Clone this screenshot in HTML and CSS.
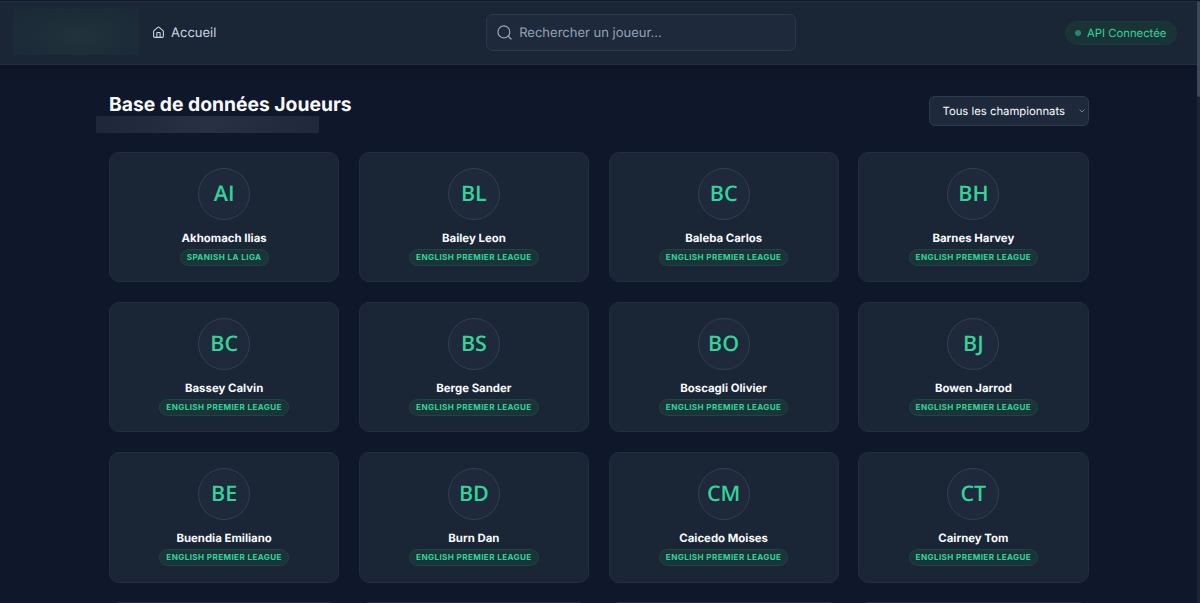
FILE: index.html
```html
<!DOCTYPE html>
<html lang="fr">
<head>
  <meta charset="UTF-8" />
  <meta name="viewport" content="width=device-width, initial-scale=1.0"/>
  <title>Base de données Joueurs</title>
  <link rel="stylesheet" href="styles.css">
</head>
<body>
  <header class="navbar">
    <div class="nav-left">
      <div class="logo"></div>
      <a class="nav-link" href="#">
        <svg width="13" height="13" viewBox="0 0 24 24" fill="none" stroke="currentColor" stroke-width="2" stroke-linecap="round" stroke-linejoin="round">
          <path d="M15 21v-8a1 1 0 0 0-1-1h-4a1 1 0 0 0-1 1v8"/>
          <path d="M3 10a2 2 0 0 1 .7-1.5l7-6a2 2 0 0 1 2.6 0l7 6A2 2 0 0 1 21 10v9a2 2 0 0 1-2 2H5a2 2 0 0 1-2-2z"/>
        </svg>
        <span>Accueil</span>
      </a>
    </div>
    <div class="search">
      <svg width="15" height="15" viewBox="0 0 24 24" fill="none" stroke="currentColor" stroke-width="2" stroke-linecap="round" stroke-linejoin="round">
        <circle cx="11" cy="11" r="9.500"/>
        <path d="M22.500 22.500l-4.500-4.500"/>
      </svg>
      <input class="search-input" type="text" placeholder="Rechercher un joueur..." />
    </div>
    <div class="status"><span class="dot"></span>API Connectée</div>
  </header>

  <main class="container">
    <div class="page-head">
      <div class="titles">
        <h1>Base de données Joueurs</h1>
        <div class="subtitle"></div>
      </div>
      <button class="league-select" type="button">
        <span>Tous les championnats</span>
        <svg width="6" height="4" viewBox="0 0 6 4" fill="none" stroke="currentColor" stroke-width="1"><path d="M.5 .5L3 3L5.500 .5"/></svg>
      </button>
    </div>

    <div class="grid" id="players"></div>
  </main>

  <div class="scrollbar"><div class="thumb"></div></div>

  <script>
    const players = [
      ["Akhomach Ilias", "Spanish La Liga"],
      ["Bailey Leon", "English Premier League"],
      ["Baleba Carlos", "English Premier League"],
      ["Barnes Harvey", "English Premier League"],
      ["Bassey Calvin", "English Premier League"],
      ["Berge Sander", "English Premier League"],
      ["Boscagli Olivier", "English Premier League"],
      ["Bowen Jarrod", "English Premier League"],
      ["Buendia Emiliano", "English Premier League"],
      ["Burn Dan", "English Premier League"],
      ["Caicedo Moises", "English Premier League"],
      ["Cairney Tom", "English Premier League"]
    ];

    const grid = document.getElementById("players");
    players.forEach(([name, league]) => {
      const initials = name.split(" ").map(w => w[0]).join("");
      grid.insertAdjacentHTML("beforeend", `
        <article class="card">
          <div class="avatar">${initials}</div>
          <h2 class="name">${name}</h2>
          <span class="league">${league}</span>
        </article>`);
    });

    // Haut de la ligne suivante
    for (let i = 0; i < 4; i++) {
      grid.insertAdjacentHTML("beforeend", '<article class="card next"></article>');
    }
  </script>
</body>
</html>
```
FILE: styles.css
```css
* {
  box-sizing: border-box;
}
body {
  margin: 0;
  height: 603px;
  overflow: hidden;
  background: #0f172a;
  color: #f8fafc;
  font-family: Inter, "Liberation Sans", sans-serif;
  text-rendering: geometricPrecision;
  border-top: 1px solid #11162a;
}
.navbar {
  display: flex;
  align-items: center;
  justify-content: space-between;
  height: 64px;
  margin-right: 3px;
  padding: 0 20px 1px 13px;
  background: #1a2536;
  border-top: 1px solid #222c3e;
  border-bottom: 1px solid #243042;
  box-shadow: 0 3px 12px rgba(0,0,0,0.2);
}
.nav-left {
  display: flex;
  align-items: center;
  gap: 13px;
}
.logo {
  width: 126px;
  height: 47px;
  margin-top: -2px;
  background: radial-gradient(ellipse at 52% 60%, #22323c, #1c2d39 55%, #192834);
}
.nav-link {
  display: flex;
  align-items: center;
  gap: 6px;
  color: #cbd5e1;
  font-size: 13px;
  text-decoration: none;
}
.search {
  display: flex;
  align-items: center;
  gap: 7px;
  width: 310px;
  height: 37px;
  margin-left: 1px;
  padding: 0 10px;
  background: #1e293b;
  border: 1px solid #2d394a;
  border-radius: 7px;
  color: #94a3b8;
}
.search-input {
  flex: 1;
  min-width: 0;
  padding: 0;
  border: none;
  outline: none;
  background: none;
  color: #f8fafc;
  font-family: inherit;
  font-size: 13px;
  text-rendering: inherit;
}
.search-input::placeholder {
  color: #94a3b8;
}
.status {
  display: flex;
  align-items: center;
  gap: 6px;
  width: 112px;
  height: 24px;
  padding: 0 9px;
  background: #193337;
  border: 1px solid #193a3b;
  border-radius: 12px;
  color: #34d399;
  font-size: 11.3px;
  white-space: nowrap;
}
.dot {
  flex-shrink: 0;
  width: 6px;
  height: 6px;
  border-radius: 50%;
  background: #2b856c;
}
.container {
  width: 979.5px;
  margin-left: 109px;
}
.page-head {
  display: flex;
  justify-content: space-between;
  align-items: flex-start;
  height: 86.5px;
  padding-top: 27px;
}
h1 {
  margin: 0;
  font-size: 19.3px;
  line-height: 24px;
  font-weight: 700;
}
.subtitle {
  width: 223px;
  height: 17px;
  margin-left: -13px;
  background: linear-gradient(90deg, #1e273a, #283144 50%, #20293c);
}
.league-select {
  display: flex;
  align-items: center;
  justify-content: space-between;
  width: 160px;
  height: 30px;
  margin-top: 4px;
  padding: 0 3px 0 13px;
  background: #1e293b;
  border: 1px solid #303c4d;
  border-radius: 6px;
  color: #f8fafc;
  font-family: inherit;
  font-size: 11.3px;
  text-rendering: inherit;
}
.league-select svg {
  color: #748094;
}
.grid {
  display: grid;
  grid-template-columns: repeat(4, 1fr);
  grid-template-rows: repeat(3, 130.7px) 1fr;
  gap: 19.5px;
  height: 451.5px;
}
.card {
  display: flex;
  flex-direction: column;
  align-items: center;
  padding-top: 15px;
  background: #1a2536;
  border: 1px solid #222d3f;
  border-radius: 10px;
}
.card.next {
  height: 1px;
  margin: 0 8px;
  padding: 0;
  border-width: 1px 0 0;
  border-radius: 0;
}
.avatar {
  display: flex;
  align-items: center;
  justify-content: center;
  width: 52px;
  height: 52px;
  background: #1e293b;
  border: 1px solid #334052;
  border-radius: 50%;
  color: #34d399;
  font-family: "Open Sans", "Noto Sans", sans-serif;
  font-size: 21.5px;
  font-weight: 600;
  line-height: 50px;
}
.name {
  margin: 10px 0 3px;
  font-size: 11.4px;
  line-height: 16px;
  font-weight: 700;
}
.league {
  display: flex;
  align-items: center;
  height: 17px;
  padding: 0 6px 1px;
  background: #1b3439;
  border: 1px solid #1d4542;
  border-radius: 9px;
  color: #34d399;
  font-size: 8.1px;
  font-weight: 700;
  letter-spacing: 0.4px;
  text-transform: uppercase;
}
.scrollbar {
  position: absolute;
  top: 1px;
  right: 0;
  width: 3px;
  height: 602px;
  background: #1a2435;
}
.thumb {
  height: 96px;
  background: #3d495b;
  border-radius: 2px;
}
```
